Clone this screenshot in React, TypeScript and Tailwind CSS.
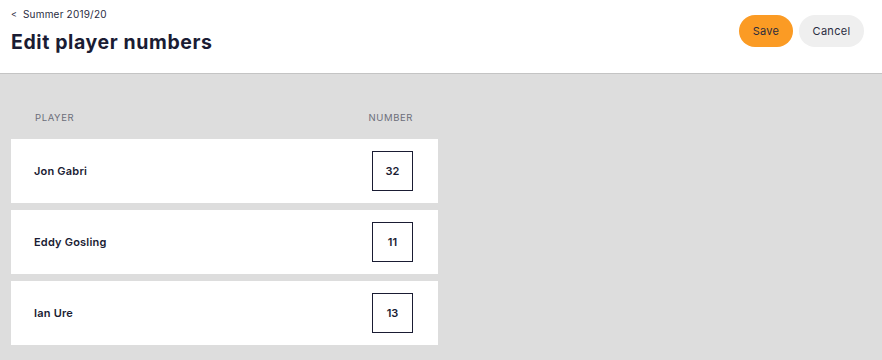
import React from 'react';

const players = [
  { id: 'p1', name: 'Jon Gabri', number: '32' },
  { id: 'p2', name: 'Eddy Gosling', number: '11' },
  { id: 'p3', name: 'Ian Ure', number: '13' },
];

const App: React.FC = () => {
  return (
    <div className="min-h-[360px] bg-[#dddddd] font-['Inter','Noto_Sans',sans-serif] text-[#1a1c33]">
      <header className="h-[74px] bg-white border-b border-[#c4c4c4] flex justify-between px-[11px]">
        <div className="pt-[8px]">
          <div className="flex items-center gap-[6px] text-[10px] leading-[12px] text-[#2a2c3f]">
            <span className="text-[9px]">&lt;</span>
            <span className="tracking-[0.2px]">Summer 2019/20</span>
          </div>
          <h1 className="mt-[10px] text-[19.5px] leading-[24px] font-bold tracking-[0.6px]">Edit player numbers</h1>
        </div>
        <div className="flex gap-[6px] pt-[15px] pr-[7px]">
          <button className="h-[32px] w-[54px] rounded-full bg-[#fb9b24] text-[11px] tracking-[0.3px] text-[#2a2c3f]">Save</button>
          <button className="h-[32px] w-[65px] rounded-full bg-[#efefef] text-[11px] tracking-[0.3px] text-[#2a2c3f]">Cancel</button>
        </div>
      </header>

      <main className="px-[11px] pt-[38px] w-[449px]">
        <div className="flex justify-between px-[24px] pr-[25px] text-[9.5px] leading-[12px] tracking-[0.6px] text-[#6c6e7a]">
          <span>PLAYER</span>
          <span>NUMBER</span>
        </div>
        <div className="mt-[15px] flex flex-col gap-[7px]">
          {players.map(p => (
            <div key={p.id} className="h-[64px] bg-white flex items-center justify-between pl-[23px] pr-[25px]">
              <span className="text-[11px] font-semibold tracking-[0.2px]">{p.name}</span>
              <div className="w-[41px] h-[40px] border border-[#1a1c33] flex items-center justify-center text-[11px] font-semibold">
                {p.number}
              </div>
            </div>
          ))}
        </div>
      </main>
    </div>
  );
};

export default App;
